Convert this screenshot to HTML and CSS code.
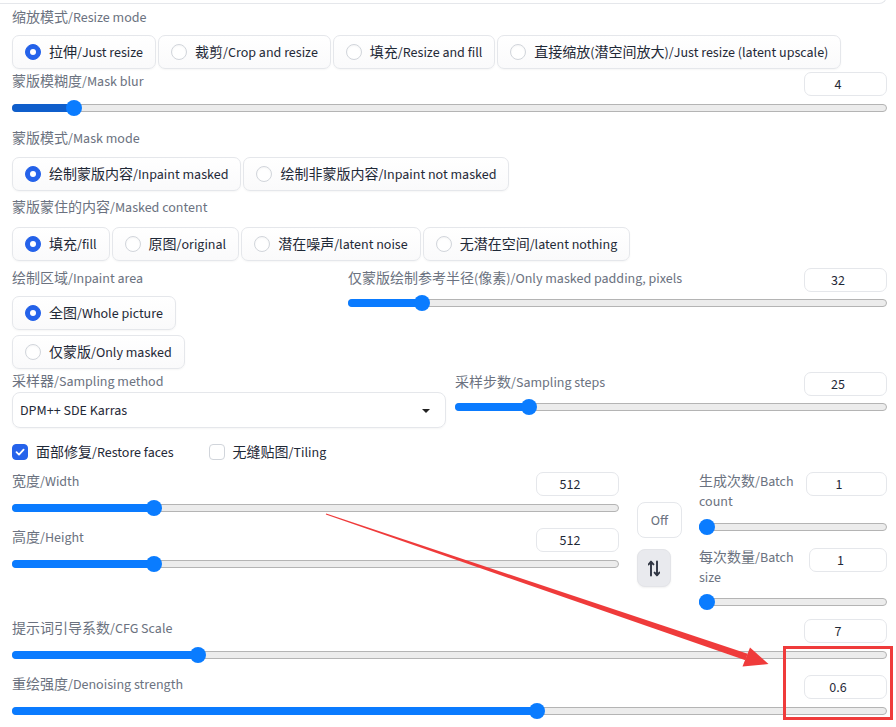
FILE: index.html
```html
<!DOCTYPE html>
<html lang="zh-CN">
<head>
    <meta charset="UTF-8">
    <title>img2img inpaint settings</title>
    <link rel="stylesheet" href="styles.css">
</head>
<body>
    <div class="page">
        <div class="prev-edge"></div>

        <div class="label resize-label">缩放模式/Resize mode</div>
        <div class="radio-row mt8">
            <label class="radio"><span class="dot on"></span><span class="txt">拉伸/Just resize</span></label>
            <label class="radio"><span class="dot"></span><span class="txt">裁剪/Crop and resize</span></label>
            <label class="radio"><span class="dot"></span><span class="txt">填充/Resize and fill</span></label>
            <label class="radio"><span class="dot"></span><span class="txt">直接缩放(潜空间放大)/Just resize (latent upscale)</span></label>
        </div>

        <div class="field mt3">
            <div class="field-head">
                <span class="label head-label">蒙版模糊度/Mask blur</span>
                <div class="num">4</div>
            </div>
            <div class="slider mt4">
                <div class="track"></div>
                <div class="fill dark" style="width:62px"></div>
                <div class="thumb" style="left:62px"></div>
            </div>
        </div>

        <div class="label mt12">蒙版模式/Mask mode</div>
        <div class="radio-row mt9">
            <label class="radio"><span class="dot on"></span><span class="txt">绘制蒙版内容/Inpaint masked</span></label>
            <label class="radio"><span class="dot"></span><span class="txt">绘制非蒙版内容/Inpaint not masked</span></label>
        </div>

        <div class="label mt6">蒙版蒙住的内容/Masked content</div>
        <div class="radio-row mt10">
            <label class="radio"><span class="dot on"></span><span class="txt">填充/fill</span></label>
            <label class="radio"><span class="dot"></span><span class="txt">原图/original</span></label>
            <label class="radio"><span class="dot"></span><span class="txt">潜在噪声/latent noise</span></label>
            <label class="radio"><span class="dot"></span><span class="txt">无潜在空间/latent nothing</span></label>
        </div>

        <div class="row area-row mt7">
            <div class="col area-left">
                <div class="label">绘制区域/Inpaint area</div>
                <div class="radio-col">
                    <label class="radio"><span class="dot on"></span><span class="txt">全图/Whole picture</span></label>
                    <label class="radio"><span class="dot"></span><span class="txt">仅蒙版/Only masked</span></label>
                </div>
            </div>
            <div class="col area-right">
                <div class="field-head">
                    <span class="label">仅蒙版绘制参考半径(像素)/Only masked padding, pixels</span>
                    <div class="num">32</div>
                </div>
                <div class="slider mt3">
                    <div class="track"></div>
                    <div class="fill" style="width:74px"></div>
                    <div class="thumb" style="left:74px"></div>
                </div>
            </div>
        </div>

        <div class="row sampler-row mt2">
            <div class="col sampler-left">
                <div class="label">采样器/Sampling method</div>
                <div class="dropdown">
                    <span>DPM++ SDE Karras</span>
                    <span class="caret"></span>
                </div>
            </div>
            <div class="col sampler-right">
                <div class="field-head">
                    <span class="label">采样步数/Sampling steps</span>
                    <div class="num">25</div>
                </div>
                <div class="slider mt3">
                    <div class="track"></div>
                    <div class="fill" style="width:74px"></div>
                    <div class="thumb" style="left:74px"></div>
                </div>
            </div>
        </div>

        <div class="checks">
            <label class="check">
                <span class="box on">
                    <svg width="12" height="12" viewBox="0 0 12 12"><path d="M2.5 6.2 L5 8.6 L9.6 3.6" fill="none" stroke="#fff" stroke-width="1.8" stroke-linecap="round" stroke-linejoin="round"/></svg>
                </span>
                <span class="txt">面部修复/Restore faces</span>
            </label>
            <label class="check"><span class="box"></span><span class="txt">无缝贴图/Tiling</span></label>
        </div>

        <div class="size-block">
            <div class="size-left">
                <div class="field-head">
                    <span class="label head-label">宽度/Width</span>
                    <div class="num">512</div>
                </div>
                <div class="slider mt4">
                    <div class="track"></div>
                    <div class="fill" style="width:142px"></div>
                    <div class="thumb" style="left:142px"></div>
                </div>
                <div class="field-head mt12">
                    <span class="label head-label">高度/Height</span>
                    <div class="num">512</div>
                </div>
                <div class="slider mt4">
                    <div class="track"></div>
                    <div class="fill" style="width:142px"></div>
                    <div class="thumb" style="left:142px"></div>
                </div>
            </div>

            <div class="size-mid">
                <button class="btn-off">Off</button>
                <button class="btn-swap">
                    <svg width="12" height="17" viewBox="0 0 12 17">
                        <path d="M3 15.5 V1.8 M0.6 4.4 L3 1.6 L5.4 4.4" fill="none" stroke="#2f3542" stroke-width="1.9" stroke-linecap="round" stroke-linejoin="round"/>
                        <path d="M9 1.5 V15.2 M6.6 12.6 L9 15.4 L11.4 12.6" fill="none" stroke="#2f3542" stroke-width="1.9" stroke-linecap="round" stroke-linejoin="round"/>
                    </svg>
                </button>
            </div>

            <div class="size-right">
                <div class="field-head">
                    <span class="label head-label batch-label">生成次数/Batch count</span>
                    <div class="num num-81">1</div>
                </div>
                <div class="slider mt7">
                    <div class="track"></div>
                    <div class="fill" style="width:8px"></div>
                    <div class="thumb" style="left:8px"></div>
                </div>
                <div class="field-head mt13">
                    <span class="label head-label batch-label">每次数量/Batch size</span>
                    <div class="num num-78">1</div>
                </div>
                <div class="slider mt6">
                    <div class="track"></div>
                    <div class="fill" style="width:8px"></div>
                    <div class="thumb" style="left:8px"></div>
                </div>
            </div>
        </div>

        <div class="field mt9">
            <div class="field-head">
                <span class="label head-label">提示词引导系数/CFG Scale</span>
                <div class="num">7</div>
            </div>
            <div class="slider mt4">
                <div class="track"></div>
                <div class="fill" style="width:186px"></div>
                <div class="thumb" style="left:186px"></div>
            </div>
        </div>

        <div class="field mt12">
            <div class="field-head">
                <span class="label head-label">重绘强度/Denoising strength</span>
                <div class="num">0.6</div>
            </div>
            <div class="slider mt4">
                <div class="track"></div>
                <div class="fill" style="width:525px"></div>
                <div class="thumb" style="left:525px"></div>
            </div>
        </div>

        <!-- red annotation drawn over the screenshot -->
        <svg class="annotation" width="896" height="727" viewBox="0 0 896 727">
            <polygon points="325.8,521.5 326.2,520.5 747.6,660.7 745.4,667.3" fill="#ef3b3b"/>
            <polygon points="750,654.5 768.5,671 742.5,673.5" fill="#ef3b3b"/>
            <rect x="784.5" y="654.5" width="107" height="71" fill="none" stroke="#ef3b3b" stroke-width="3"/>
        </svg>
    </div>
</body>
</html>
```

FILE: styles.css
```css
html, body {
    margin: 0;
    padding: 0;
    background: #ffffff;
    overflow: hidden;
}

body {
    font-family: "Source Sans 3", "Noto Sans CJK SC", sans-serif;
    font-size: 14px;
    color: #1f2937;
}

.page {
    position: relative;
    width: 896px;
    height: 727px;
    box-sizing: border-box;
    padding: 0 9px 0 12px;
}

.prev-edge {
    height: 10px;
    margin: -7px 0 0 -12px;
    border-right: 1px solid #e5e7eb;
    border-bottom: 1px solid #e5e7eb;
    border-radius: 0 0 8px 0;
}

.mt2 { margin-top: 2px; }
.mt3 { margin-top: 3px; }
.mt4 { margin-top: 4px; }
.mt6 { margin-top: 6px; }
.mt7 { margin-top: 7px; }
.mt8 { margin-top: 8px; }
.mt9 { margin-top: 9px; }
.mt10 { margin-top: 10px; }
.mt12 { margin-top: 12px; }
.mt13 { margin-top: 13px; }

/* the text sits 1px low in its 20px line, like the original */
.label {
    padding-top: 2px;
    font-size: 14px;
    line-height: 18px;
    color: #6b7280;
}

.txt {
    padding-top: 2px;
    line-height: 18px;
}

.resize-label {
    margin-top: 3px;
}

.head-label {
    margin-top: -1px;
}

.batch-label {
    width: 100px;
    padding-top: 1px;
    line-height: 20px;
}

/* radio groups */
.radio-row {
    display: flex;
    gap: 2px;
}

.radio-col {
    display: flex;
    flex-direction: column;
    align-items: flex-start;
    gap: 5px;
    margin-top: 8px;
}

.radio {
    display: inline-flex;
    align-items: center;
    gap: 8px;
    height: 34px;
    box-sizing: border-box;
    padding: 0 12px;
    border: 1px solid #e5e7eb;
    border-radius: 7px;
    background: linear-gradient(#ffffff, #fafafb);
    box-shadow: 0 1px 2px rgba(0, 0, 0, 0.04);
    color: #1f2937;
    white-space: nowrap;
}

.dot {
    position: relative;
    width: 16px;
    height: 16px;
    box-sizing: border-box;
    border-radius: 50%;
    border: 1px solid #d1d5db;
    background: #ffffff;
    box-shadow: inset 0 1px 2px rgba(0, 0, 0, 0.04);
    flex: none;
}

.dot.on {
    background: #2563eb;
    border-color: #2563eb;
}

.dot.on::after {
    content: "";
    position: absolute;
    left: 4px;
    top: 4px;
    width: 6px;
    height: 6px;
    border-radius: 50%;
    background: #ffffff;
}

/* number fields + sliders */
.field-head {
    display: flex;
    justify-content: space-between;
    align-items: flex-start;
}

.num {
    width: 83px;
    height: 24px;
    box-sizing: border-box;
    padding: 2px 15px 0 0;
    border: 1px solid #e5e7eb;
    border-radius: 7px;
    text-align: center;
    line-height: 20px;
    font-size: 14px;
    color: #1f2937;
    flex: none;
}

.num-81 { width: 81px; }
.num-78 { width: 78px; }

.slider {
    position: relative;
    height: 16px;
}

.track {
    position: absolute;
    left: 0;
    right: 0;
    top: 4px;
    height: 8px;
    box-sizing: border-box;
    border: 1px solid #b4b4b4;
    border-radius: 4px;
    background: #ececec;
}

.fill {
    position: absolute;
    left: 0;
    top: 4px;
    height: 8px;
    border-radius: 4px;
    background: #0a7bff;
}

.fill.dark {
    background: #0f5ecb;
}

.thumb {
    position: absolute;
    top: 0;
    width: 16px;
    height: 16px;
    margin-left: -8px;
    border-radius: 50%;
    background: #0a7cff;
}

/* rows */
.row {
    display: flex;
}

.area-left {
    width: 328px;
}

.area-right {
    width: 539px;
    margin-left: 8px;
}

.sampler-left {
    width: 434px;
}

.sampler-right {
    width: 432px;
    margin-left: 9px;
    padding-top: 1px;
}

.dropdown {
    display: flex;
    align-items: center;
    justify-content: space-between;
    height: 36px;
    box-sizing: border-box;
    margin-top: 1px;
    padding: 2px 15px 0 7px;
    border: 1px solid #e5e7eb;
    border-radius: 8px;
    box-shadow: 0 1px 2px rgba(0, 0, 0, 0.04);
    color: #1f2937;
}

.caret {
    width: 0;
    height: 0;
    border-left: 4px solid transparent;
    border-right: 4px solid transparent;
    border-top: 4px solid #222222;
}

/* checkboxes */
.checks {
    display: flex;
    margin-top: 14px;
    height: 20px;
}

.check {
    display: inline-flex;
    align-items: center;
    gap: 8px;
    color: #1f2937;
}

.check + .check {
    margin-left: 35px;
}

.box {
    display: flex;
    align-items: center;
    justify-content: center;
    width: 16px;
    height: 16px;
    box-sizing: border-box;
    border: 1px solid #d1d5db;
    border-radius: 4px;
    background: #ffffff;
}

.box.on {
    background: #2563eb;
    border-color: #2563eb;
}

/* width / height / batch block */
.size-block {
    display: flex;
    margin-top: 10px;
}

.size-left {
    width: 607px;
}

.size-mid {
    display: flex;
    flex-direction: column;
    align-items: flex-start;
    gap: 11px;
    width: 45px;
    margin-left: 18px;
    padding-top: 30px;
}

.size-right {
    width: 188px;
    margin-left: 17px;
}

.btn-off {
    width: 45px;
    height: 36px;
    padding: 2px 0 0;
    border: 1px solid #e5e7eb;
    border-radius: 8px;
    background: #ffffff;
    color: #6b7280;
    font-family: inherit;
    font-size: 14px;
}

.btn-swap {
    display: flex;
    align-items: center;
    justify-content: center;
    width: 34px;
    height: 38px;
    padding: 0;
    border: 1px solid #e3e4e8;
    border-radius: 8px;
    background: #e9eaee;
    box-shadow: 0 1px 2px rgba(0, 0, 0, 0.06);
}

.annotation {
    position: absolute;
    left: 0;
    top: 0;
    pointer-events: none;
}
```
